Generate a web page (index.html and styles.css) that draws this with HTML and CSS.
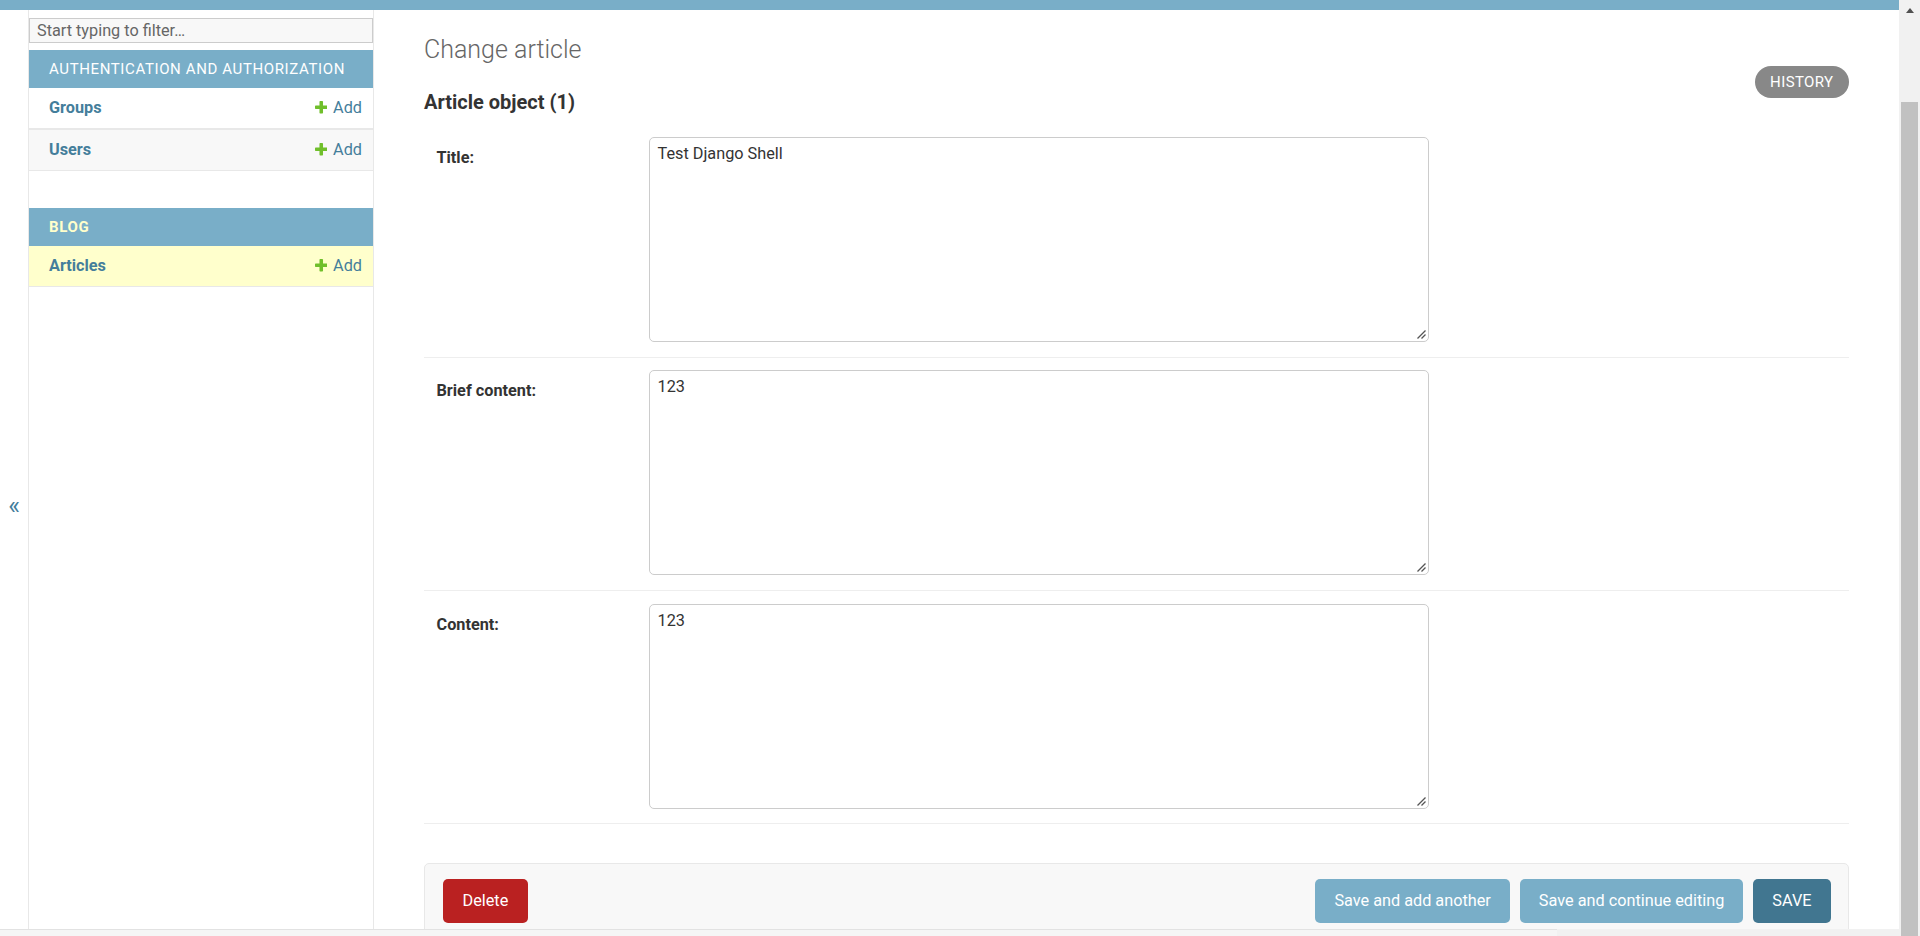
FILE: index.html
```html
<!DOCTYPE html>
<html lang="en">
<head>
<meta charset="utf-8">
<title>Change article | Django site admin</title>
<link rel="stylesheet" href="styles.css">
</head>
<body>
<div class="window">
  <div class="viewport">
    <div class="topbar"></div>
    <div class="main">
      <div class="toggle"><span class="toggle-glyph">«</span></div>
      <nav class="sidebar">
        <input class="nav-filter" type="search" placeholder="Start typing to filter…">
        <div class="module">
          <div class="caption">Authentication and Authorization</div>
          <div class="row first">
            <span class="model">Groups</span>
            <span class="addlink"><svg class="plus" viewBox="0 0 12 12"><rect x="0" y="4.3" width="12" height="3.4" rx="0.7"/><rect x="4.3" y="0" width="3.4" height="12" rx="0.7"/></svg>Add</span>
          </div>
          <div class="row alt">
            <span class="model">Users</span>
            <span class="addlink"><svg class="plus" viewBox="0 0 12 12"><rect x="0" y="4.3" width="12" height="3.4" rx="0.7"/><rect x="4.3" y="0" width="3.4" height="12" rx="0.7"/></svg>Add</span>
          </div>
        </div>
        <div class="module">
          <div class="caption current">Blog</div>
          <div class="row selected">
            <span class="model">Articles</span>
            <span class="addlink"><svg class="plus" viewBox="0 0 12 12"><rect x="0" y="4.3" width="12" height="3.4" rx="0.7"/><rect x="4.3" y="0" width="3.4" height="12" rx="0.7"/></svg>Add</span>
          </div>
        </div>
      </nav>
      <div class="content">
        <div class="content-head">
          <div class="titles">
            <h1>Change article</h1>
            <h2>Article object (1)</h2>
          </div>
          <a class="history">History</a>
        </div>
        <div class="fieldset">
          <div class="form-row">
            <label class="req">Title:</label>
            <div class="field-wrap">
              <textarea class="field">Test Django Shell</textarea>
              <svg class="grip" viewBox="0 0 10 10"><path d="M9.5 1.5 L1.5 9.5 M9.5 5.5 L5.5 9.5"/></svg>
            </div>
          </div>
          <div class="form-row">
            <label class="req">Brief content:</label>
            <div class="field-wrap">
              <textarea class="field">123</textarea>
              <svg class="grip" viewBox="0 0 10 10"><path d="M9.5 1.5 L1.5 9.5 M9.5 5.5 L5.5 9.5"/></svg>
            </div>
          </div>
          <div class="form-row">
            <label class="req">Content:</label>
            <div class="field-wrap">
              <textarea class="field">123</textarea>
              <svg class="grip" viewBox="0 0 10 10"><path d="M9.5 1.5 L1.5 9.5 M9.5 5.5 L5.5 9.5"/></svg>
            </div>
          </div>
        </div>
        <div class="submit-row">
          <a class="btn delete">Delete</a>
          <div class="save-group">
            <button class="btn secondary">Save and add another</button>
            <button class="btn secondary">Save and continue editing</button>
            <button class="btn primary">SAVE</button>
          </div>
        </div>
      </div>
    </div>
    <div class="hscroll"><div class="hthumb"></div></div>
  </div>
  <div class="vscroll">
    <div class="varrow"></div>
    <div class="vthumb"></div>
  </div>
</div>
</body>
</html>
```

FILE: styles.css
```css
* { box-sizing: border-box; }

html, body {
  margin: 0;
  padding: 0;
  height: 936px;
  overflow: hidden;
  background: #fff;
  font-family: Roboto, "Liberation Sans", Arial, sans-serif;
  color: #333;
}

.window {
  display: flex;
  width: 1920px;
  height: 936px;
  overflow: hidden;
}

.viewport {
  flex: 1;
  display: flex;
  flex-direction: column;
  min-width: 0;
}

.topbar {
  height: 10px;
  background: #79aec8;
  flex-shrink: 0;
}

.main {
  flex: 1;
  display: flex;
  min-height: 0;
  overflow: hidden;
}

/* toggle column */
.toggle {
  width: 29px;
  flex-shrink: 0;
  border-right: 1px solid #e8e8e8;
  text-align: center;
  padding-top: 481px;
}
.toggle-glyph {
  display: block;
  font-size: 25px;
  line-height: 30px;
  color: #447e9b;
}

/* sidebar */
.sidebar {
  width: 345px;
  flex-shrink: 0;
  border-right: 1px solid #e8e8e8;
  padding-top: 8px;
}

.nav-filter {
  display: block;
  width: 344px;
  height: 25px;
  margin: 0 0 7px 0;
  padding: 0 7px;
  border: 1px solid #ccc;
  background: #f8f8f8;
  font-family: Roboto, "Liberation Sans", Arial, sans-serif;
  font-size: 16.25px;
  color: #333;
  outline: none;
  -webkit-appearance: none;
  appearance: none;
}
.nav-filter::placeholder { color: #666; }

.module { margin-bottom: 37px; }

.caption {
  height: 38px;
  line-height: 38px;
  padding-left: 20px;
  background: #79aec8;
  color: #fff;
  font-size: 15px;
  letter-spacing: 0.62px;
  text-transform: uppercase;
  font-weight: 400;
}
.caption.current {
  color: #ffc;
  font-weight: 700;
}

.row {
  display: flex;
  justify-content: space-between;
  align-items: center;
  height: 41px;
  padding: 0 11px 1px 20px;
  border-bottom: 1px solid #e8e8e8;
  background: #fff;
  font-size: 16.25px;
}
.row.first {
  height: 42px;
  border-bottom-width: 2px;
}
.row.alt { background: #f8f8f8; }
.row.selected { background: #ffc; }

.model {
  font-weight: 700;
  color: #447e9b;
}
.addlink {
  display: flex;
  align-items: center;
  color: #447e9b;
}
.plus {
  width: 12.5px;
  height: 12.5px;
  margin-right: 6px;
  fill: #70bf2b;
}

/* content */
.content {
  flex: 1;
  min-width: 0;
  padding: 25px 50px 0 50px;
}

.content-head {
  display: flex;
  justify-content: space-between;
  align-items: flex-start;
}

h1 {
  margin: 0 0 25px 0;
  font-size: 25px;
  line-height: 30px;
  font-weight: 300;
  color: #666;
}

h2 {
  margin: 0 0 11px 0;
  font-size: 20px;
  line-height: 24px;
  font-weight: 700;
  color: #333;
}

.history {
  margin-top: 31px;
  height: 32px;
  line-height: 32px;
  padding: 0 15.5px;
  border-radius: 16px;
  background: #888;
  color: #fff;
  font-size: 15px;
  letter-spacing: 0.4px;
  text-transform: uppercase;
}

.form-row {
  display: flex;
  padding: 12px 0 15px 12.5px;
  border-bottom: 1px solid #eee;
}
.form-row:last-child {
  padding-top: 13px;
  padding-bottom: 14px;
}

.form-row label {
  width: 212.5px;
  flex-shrink: 0;
  padding: 11px 12.5px 0 0;
  font-size: 16.25px;
  line-height: 20px;
}
.form-row label.req {
  font-weight: 700;
  color: #333;
}

.field-wrap {
  position: relative;
  width: 780px;
  height: 205px;
}

.field {
  display: block;
  margin: 0;
  width: 780px;
  height: 205px;
  padding: 6px 7.5px;
  border: 1px solid #ccc;
  border-radius: 5px;
  background: #fff;
  font-family: Roboto, "Liberation Sans", Arial, sans-serif;
  font-size: 16.25px;
  color: #333;
  outline: none;
  resize: none;
}

.grip {
  position: absolute;
  right: 3px;
  bottom: 3px;
  width: 10px;
  height: 10px;
  fill: none;
  stroke: #555;
  stroke-width: 1.3;
}

.submit-row {
  display: flex;
  justify-content: space-between;
  align-items: center;
  margin-top: 39px;
  padding: 15px 17.5px 19px;
  background: #f8f8f8;
  border: 1px solid #e8e8e8;
  border-radius: 5px;
}

.save-group {
  display: flex;
  gap: 10px;
}

.btn {
  display: block;
  height: 44px;
  line-height: 44px;
  padding: 0 19px;
  border: none;
  border-radius: 5px;
  color: #fff;
  font-family: Roboto, "Liberation Sans", Arial, sans-serif;
  font-size: 16.25px;
  font-weight: 400;
}
.btn.delete {
  background: #ba2121;
  padding: 0 20px;
}
.btn.secondary { background: #79aec8; }
.btn.primary { background: #417690; }

/* fake scrollbars */
.hscroll {
  height: 7px;
  flex-shrink: 0;
  background: #f1f1f1;
}
.hthumb {
  width: 1557px;
  height: 7px;
  background: #f5f5f5;
  border-top: 1px solid #e2e2e2;
}

.vscroll {
  width: 21px;
  flex-shrink: 0;
  background: #f1f1f1;
  display: flex;
  flex-direction: column;
  align-items: center;
}
.varrow {
  margin-top: 8px;
  width: 0;
  height: 0;
  border-left: 4.5px solid transparent;
  border-right: 4.5px solid transparent;
  border-bottom: 5px solid #505050;
}
.vthumb {
  margin-top: 89px;
  width: 17px;
  flex: 1;
  background: #c1c1c1;
}
```
